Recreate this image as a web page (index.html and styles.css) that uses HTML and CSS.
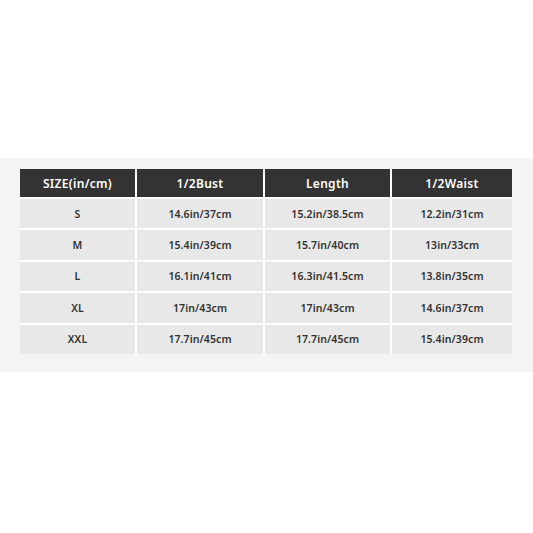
FILE: index.html
```html
<!DOCTYPE html>
<html>
<head>
<meta charset="utf-8">
<link rel="stylesheet" href="styles.css">
</head>
<body>
<div class="page">
  <div class="band">
    <div class="table">
      <div class="cell head">SIZE(in/cm)</div>
      <div class="cell head">1/2Bust</div>
      <div class="cell head">Length</div>
      <div class="cell head">1/2Waist</div>

      <div class="cell">S</div>
      <div class="cell">14.6in/37cm</div>
      <div class="cell">15.2in/38.5cm</div>
      <div class="cell">12.2in/31cm</div>

      <div class="cell">M</div>
      <div class="cell">15.4in/39cm</div>
      <div class="cell">15.7in/40cm</div>
      <div class="cell">13in/33cm</div>

      <div class="cell">L</div>
      <div class="cell">16.1in/41cm</div>
      <div class="cell">16.3in/41.5cm</div>
      <div class="cell">13.8in/35cm</div>

      <div class="cell">XL</div>
      <div class="cell">17in/43cm</div>
      <div class="cell">17in/43cm</div>
      <div class="cell">14.6in/37cm</div>

      <div class="cell">XXL</div>
      <div class="cell">17.7in/45cm</div>
      <div class="cell">17.7in/45cm</div>
      <div class="cell">15.4in/39cm</div>
    </div>
  </div>
</div>
</body>
</html>
```
FILE: styles.css
```css
html, body {
  margin: 0;
  padding: 0;
  background: #ffffff;
}
.page {
  width: 533px;
  height: 533px;
  padding-top: 158px;
  box-sizing: border-box;
}
.band {
  background: #f4f4f4;
  height: 214px;
  padding: 11px 21px 0 20px;
  box-sizing: border-box;
}
.table {
  display: grid;
  grid-template-columns: 115px 126px 125px 120px;
  grid-template-rows: 28px repeat(5, 29.4px);
  gap: 2px;
  background: #ffffff;
  width: 492px;
}
.cell {
  background: #e8e8e8;
  color: #333333;
  font-family: "Noto Sans", "Open Sans", sans-serif;
  font-weight: 600;
  font-size: 10.5px;
  letter-spacing: 0.1px;
  display: flex;
  align-items: center;
  justify-content: center;
}
.head {
  background: #333333;
  color: #ffffff;
  font-size: 12px;
  letter-spacing: 0.3px;
}
```
